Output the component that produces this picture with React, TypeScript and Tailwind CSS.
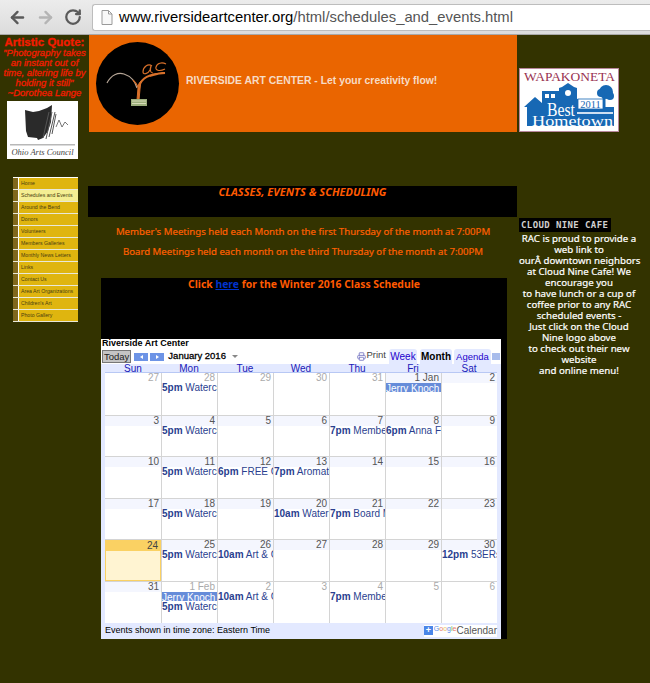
import { ArrowLeft, ArrowRight, RotateCw, Printer } from 'lucide-react'

const menuItems = [
  'Home',
  'Schedules and Events',
  'Around the Bend',
  'Donors',
  'Volunteers',
  'Members Galleries',
  'Monthly News Letters',
  'Links',
  'Contact Us',
  'Area Art Organizations',
  "Children's Art",
  'Photo Gallery',
]

const dayNames = ['Sun', 'Mon', 'Tue', 'Wed', 'Thu', 'Fri', 'Sat']

type DayCell = {
  label: string
  muted?: boolean
  today?: boolean
  events?: { text: string; banner?: boolean }[]
}

// event titles stop where the cell cuts them off in the picture
const water = { text: '5pm Waterco' }
const jerry = { text: 'Jerry Knoch', banner: true }
const art = { text: '10am Art & C' }
const member = { text: '7pm Membe' }

const weeks: DayCell[][] = [
  [
    { label: '27', muted: true },
    { label: '28', muted: true, events: [water] },
    { label: '29', muted: true },
    { label: '30', muted: true },
    { label: '31', muted: true },
    { label: '1 Jan', events: [jerry] },
    { label: '2' },
  ],
  [
    { label: '3' },
    { label: '4', events: [water] },
    { label: '5' },
    { label: '6' },
    { label: '7', events: [member] },
    { label: '8', events: [{ text: '6pm Anna Fi' }] },
    { label: '9' },
  ],
  [
    { label: '10' },
    { label: '11', events: [water] },
    { label: '12', events: [{ text: '6pm FREE C' }] },
    { label: '13', events: [{ text: '7pm Aromat' }] },
    { label: '14' },
    { label: '15' },
    { label: '16' },
  ],
  [
    { label: '17' },
    { label: '18', events: [water] },
    { label: '19' },
    { label: '20', events: [{ text: '10am Water' }] },
    { label: '21', events: [{ text: '7pm Board M' }] },
    { label: '22' },
    { label: '23' },
  ],
  [
    { label: '24', today: true },
    { label: '25', events: [water] },
    { label: '26', events: [art] },
    { label: '27' },
    { label: '28' },
    { label: '29' },
    { label: '30', events: [{ text: '12pm 53ERs' }] },
  ],
  [
    { label: '31' },
    { label: '1 Feb', muted: true, events: [jerry, water] },
    { label: '2', muted: true, events: [art] },
    { label: '3', muted: true },
    { label: '4', muted: true, events: [member] },
    { label: '5', muted: true },
    { label: '6', muted: true },
  ],
]

function BrowserBar() {
  return (
    <div className="flex h-[35px] items-center bg-gradient-to-b from-[#ececec] to-[#dcdcdc] border-b border-[#a8a8a8]">
      <div className="flex w-[92px] items-center pl-[8px] text-[#5a5a5a]">
        <ArrowLeft size={19} strokeWidth={3} />
        <ArrowRight size={19} strokeWidth={3} className="ml-[9px] text-[#b4b4b4]" />
        <RotateCw size={18} strokeWidth={3} className="ml-[9px]" />
      </div>
      <div className="flex h-[27px] w-[558px] items-center rounded-l-[3px] border border-r-0 border-[#bdbdbd] bg-white pl-[8px]">
        <svg width="12" height="15" viewBox="0 0 12 15" fill="none" stroke="#9a9a9a" strokeWidth="1">
          <path d="M1 .5h6.500L11 4v10.500H1zM7.500 .5V4H11" fill="#f8f8f8" />
        </svg>
        <span className="ml-[6px] font-['Liberation_Sans',sans-serif] text-[14.800px] whitespace-nowrap text-[#555]">
          <span className="text-black">www.riversideartcenter.org</span>/html/schedules_and_events.html
        </span>
      </div>
    </div>
  )
}

function OhioLogo() {
  return (
    <div className="mt-[3px] ml-[7px] h-[58px] w-[71px] bg-white">
      <svg width="71" height="58" viewBox="0 0 71 58">
        <path d="M18 9l8 2 6-1 8-3 5-3-1 17-3 9-5 7-5 2-1-2-9-1-2-6z" fill="#2a2a2a" />
        <path d="M36 37l6-26M39 38l6-27M42 36l6-25M45 33l4-20" stroke="#555" strokeWidth="1" fill="none" />
        <path d="M49 26l3-7 3 7 3-5 3 3" stroke="#555" strokeWidth="0.8" fill="none" />
        <rect x="3" y="43" width="65" height="1.500" fill="#b8b8b8" />
        <text x="35.500" y="54" textAnchor="middle" fontFamily="'Liberation Serif', serif" fontStyle="italic" fontSize="8.500" fill="#444">
          Ohio Arts Council
        </text>
      </svg>
    </div>
  )
}

function SideMenu() {
  return (
    <div className="mt-[18px] ml-[13px] w-[65px] bg-white pt-px">
      {menuItems.map((item, i) => (
        <div key={item} className="flex h-[12px] border-b border-[#e8e8d8]">
          <div className="w-[5px] bg-[#80681c]" />
          <div
            className={`ml-px flex flex-1 items-center overflow-hidden pl-[2px] font-['Liberation_Sans',sans-serif] text-[5.200px] whitespace-nowrap text-[#4a3d10] ${
              i === 1 ? 'bg-[#f4ee92]' : 'bg-[#dfb50f]'
            }`}
          >
            {item}
          </div>
        </div>
      ))}
    </div>
  )
}

function LeftColumn() {
  return (
    <div>
      <div className="pt-[2px] text-center font-['Liberation_Sans',sans-serif] text-[9.500px] leading-[10px] whitespace-nowrap text-[#f51b00] italic [-webkit-text-stroke:0.3px_#f51b00]">
        <p className="h-[11px] text-[11.500px] leading-[11px] font-bold not-italic">Artistic Quote:</p>
        <p>
          "Photography takes
          <br />
          an instant out of
          <br />
          time, altering life by
          <br />
          holding it still"
          <br />
          ~Dorothea Lange
        </p>
      </div>
      <OhioLogo />
      <SideMenu />
    </div>
  )
}

function RacLogo() {
  return (
    <div className="mt-[7px] ml-[7px] h-[83px] w-[83px] rounded-full bg-black">
      <svg width="83" height="83" viewBox="0 0 83 83" fill="none">
        <path d="M11 41C15 33 22 30 28 32c6 2 11 7 13 14" stroke="#b5a596" strokeWidth="1.200" />
        <path d="M41 58l1-12c0-3 1-5 3-7l-1 8-1 11z" fill="#d8702a" stroke="#d8702a" strokeWidth="1" />
        <path d="M43 44c3-8 9-12 26-13-8 0-11 2-15 3" stroke="#d8702a" strokeWidth="2" />
        <path d="M42 45c-1-3-3-5-5-7" stroke="#d8702a" strokeWidth="1.200" />
        <path d="M56 24c-4-3-9 1-9 6 0 3 5 2 7-2l1-4c-1 4-1 7 2 7" stroke="#d8702a" strokeWidth="1.200" />
        <path d="M70 22c-4-2-9-1-10 3-1 3 3 5 9 2" stroke="#d8702a" strokeWidth="1.200" />
        <rect x="35" y="57" width="16" height="7" fill="#9cae7c" />
        <path d="M36 59h14M36 61.500h14" stroke="#e6e6c8" strokeWidth="0.800" />
      </svg>
    </div>
  )
}

function Wapakoneta() {
  return (
    <div className="ml-[2px] h-[64px] w-[100px] border border-[#b8889c] bg-white">
      <svg width="98" height="62" viewBox="0 0 98 62">
        <text x="4" y="12" textLength="91" lengthAdjust="spacingAndGlyphs" fontFamily="'Liberation Serif', serif" fontSize="12" fill="#98304f">
          WAPAKONETA
        </text>
        <path
          d="M4 38L15 28l7 6V22h17v-3l3-1 6-4 6 4 3 1v11h25v8l12 0v19H7V38z"
          fill="#1768b4"
        />
        <path d="M84 40V28" stroke="#1768b4" strokeWidth="3" />
        <circle cx="86" cy="23" r="7" fill="#1768b4" />
        <circle cx="81" cy="24" r="4" fill="#1768b4" />
        <circle cx="90" cy="27" r="4" fill="#1768b4" />
        <rect x="25" y="25" width="4" height="4" fill="#fff" />
        <rect x="31" y="25" width="4" height="4" fill="#fff" />
        <circle cx="48" cy="24" r="3" fill="#fff" />
        <rect x="58" y="30" width="25" height="10" fill="#fff" stroke="#1768b4" strokeWidth="0.800" />
        <text x="70.500" y="39" textAnchor="middle" fontFamily="'Liberation Serif', serif" fontSize="10.500" fill="#1768b4">
          2011
        </text>
        <text x="27" y="47" textLength="28" lengthAdjust="spacingAndGlyphs" fontFamily="'Liberation Serif', serif" fontSize="18" fill="#fff">
          Best
        </text>
        <rect x="57" y="43" width="36" height="2" fill="#cfe0f2" />
        <text x="12" y="57" textLength="81" lengthAdjust="spacingAndGlyphs" fontFamily="'Liberation Serif', serif" fontSize="14.500" fill="#fff">
          Hometown
        </text>
      </svg>
    </div>
  )
}

function CalendarCell({ day }: { day: DayCell }) {
  return (
    <div
      className={`min-w-0 overflow-hidden ${
        day.today ? 'border border-[#fad163] bg-[#fff4d2]' : 'border-l border-[#d4d4d4] first:border-l-0'
      }`}
    >
      <div
        className={`h-[10px] pr-[2px] text-right text-[10px] leading-[10px] ${
          day.today
            ? 'bg-[#fad163] text-[#444]'
            : day.muted
              ? 'text-[#aaa]'
              : 'bg-[#f4f6fe] text-[#555]'
        }`}
      >
        {day.label}
      </div>
      {day.events?.map(ev => (
        <div
          key={ev.text}
          className={`overflow-hidden text-[10px] whitespace-nowrap ${
            ev.banner
              ? 'mb-px h-[9px] bg-[#668cd9] leading-[11px] text-white'
              : 'h-[10px] leading-[10px] text-[#2a3f8f]'
          }`}
        >
          {ev.banner ? (
            ev.text
          ) : (
            <>
              <b>{ev.text.split(' ')[0]}</b> {ev.text.split(' ').slice(1).join(' ')}
            </>
          )}
        </div>
      ))}
    </div>
  )
}

function Calendar() {
  return (
    <div className="h-[300px] w-[400px] bg-white font-['Liberation_Sans',sans-serif] text-black">
      <p className="h-[10px] pl-[1px] text-[9px] leading-[9px] font-bold">Riverside Art Center</p>
      <div className="flex h-[15px] items-center text-[10px]">
        <span className="ml-px border border-[#777] bg-[#c4c4c4] px-px text-[9.500px] leading-[11px] text-[#222]">Today</span>
        <span className="ml-[3px] flex h-[8px] w-[14px] items-center justify-center bg-[#6d94e6]">
          <span className="h-0 w-0 border-y-[2px] border-r-[3px] border-y-transparent border-r-white" />
        </span>
        <span className="ml-[2px] flex h-[8px] w-[14px] items-center justify-center bg-[#6d94e6]">
          <span className="h-0 w-0 border-y-[2px] border-l-[3px] border-y-transparent border-l-white" />
        </span>
        <span className="ml-[4px] text-[9.500px] [-webkit-text-stroke:0.3px_#000]">January 2016</span>
        <span className="ml-[6px] h-0 w-0 border-x-[3px] border-t-[3px] border-x-transparent border-t-[#888]" />
        <Printer size={9} strokeWidth={2.500} className="ml-auto text-[#8080c8]" />
        <span className="mb-[3px] text-[9.500px] text-[#444]">Print</span>
        <span className="ml-[3px] h-[15px] w-[28px] rounded-t-[3px] bg-[#e3e9ff] text-center leading-[15px] text-[#20c]">Week</span>
        <span className="ml-[3px] h-[15px] w-[32px] rounded-t-[3px] bg-[#e3e9ff] text-center leading-[15px] font-bold">Month</span>
        <span className="ml-[2px] h-[15px] w-[37px] rounded-t-[3px] bg-[#e3e9ff] text-center text-[9.500px] leading-[15px] text-[#20c]">Agenda</span>
        <span className="mx-px h-[7px] w-[8px] bg-[#a8bcec]" />
      </div>
      <div className="bg-[#e3e9ff] px-[4px]">
        <div className="grid h-[9px] grid-cols-7 border-b border-[#b8c8f4] text-center text-[10px] leading-[9px] text-[#2020b8]">
          {dayNames.map(d => (
            <div key={d}>{d}</div>
          ))}
        </div>
        {weeks.map((w, i) => (
          <div
            key={i}
            className={`grid h-[41.600px] grid-cols-7 bg-white ${i > 0 ? 'border-t border-[#d4d4d4]' : ''}`}
          >
            {w.map((day, j) => (
              <CalendarCell key={j} day={day} />
            ))}
          </div>
        ))}
      </div>
      <div className="flex h-[16px] items-center bg-[#e3e9ff] pl-[4px] text-[9px]">
        <span>Events shown in time zone: Eastern Time</span>
        <span className="mr-[4px] ml-auto flex items-center bg-white text-[10px] leading-[12px] text-[#555]">
          <span className="h-[9px] w-[9px] bg-[#4a86e8] text-center text-[9px] leading-[9px] font-bold text-white">+</span>
          <span className="mb-[3px] ml-px text-[7px] leading-[8px]">
            <span className="text-[#5a8de8]">G</span>
            <span className="text-[#e87a6a]">o</span>
            <span className="text-[#e8c35a]">o</span>
            <span className="text-[#5a8de8]">g</span>
            <span className="text-[#6ab86a]">l</span>
            <span className="text-[#e87a6a]">e</span>
          </span>
          Calendar
        </span>
      </div>
    </div>
  )
}

function CenterColumn() {
  return (
    <div className="font-['Noto_Sans',sans-serif]">
      <div className="flex h-[97px] bg-[#ea6500]">
        <RacLogo />
        <p className="mt-[39px] ml-[7px] font-['Liberation_Sans',sans-serif] text-[10.400px] leading-[13px] font-bold text-[#f7dcc6]">
          RIVERSIDE ART CENTER - Let your creativity flow!
        </p>
      </div>
      <div className="mt-[54px] -ml-px h-[31px] bg-black text-center text-[11px] leading-[11px] font-bold text-[#ff5a00] italic">
        CLASSES, EVENTS &amp; SCHEDULING
      </div>
      <div className="text-center text-[9.650px] leading-[13px] text-[#ff6000] [-webkit-text-stroke:0.2px_#ff6000]">
        <p className="mt-[8px]">Member's Meetings held each Month on the first Thursday of the month at 7:00PM</p>
        <p className="mt-[7px]">Board Meetings held each month on the third Thursday of the month at 7:00PM</p>
      </div>
      <div className="mt-[20px] ml-[12px] h-[361px] w-[406px] bg-black">
        <p className="h-[61px] text-center text-[10.400px] leading-[13px] font-bold text-[#ff5a00]">
          Click <a className="text-[#0033cc] underline">here</a> for the Winter 2016 Class Schedule
        </p>
        <Calendar />
      </div>
    </div>
  )
}

function RightColumn() {
  return (
    <div className="pt-[33px]">
      <Wapakoneta />
      <div className="mt-[86px] ml-[2px] h-[14px] w-[92px] bg-black pl-[2px] font-['DejaVu_Sans_Mono',monospace] text-[9px] leading-[14px] font-bold tracking-[0.4px] whitespace-nowrap text-[#d0d0d0]">
        CLOUD NINE CAFE
      </div>
      <p className="mt-px w-[122px] pl-[2px] text-center font-['Noto_Sans',sans-serif] text-[9.700px] leading-[11px] whitespace-nowrap text-white [-webkit-text-stroke:0.2px_#fff]">
        RAC is proud to provide a
        <br />
        web link to
        <br />
        ourÂ downtown neighbors
        <br />
        at Cloud Nine Cafe! We
        <br />
        encourage you
        <br />
        to have lunch or a cup of
        <br />
        coffee prior to any RAC
        <br />
        scheduled events -
        <br />
        Just click on the Cloud
        <br />
        Nine logo above
        <br />
        to check out their new
        <br />
        website
        <br />
        and online menu!
      </p>
    </div>
  )
}

export default function App() {
  return (
    <div className="h-[683px] w-[650px] overflow-hidden bg-[#333300]">
      <BrowserBar />
      <div className="grid grid-cols-[89px_428px_133px]">
        <LeftColumn />
        <CenterColumn />
        <RightColumn />
      </div>
    </div>
  )
}
